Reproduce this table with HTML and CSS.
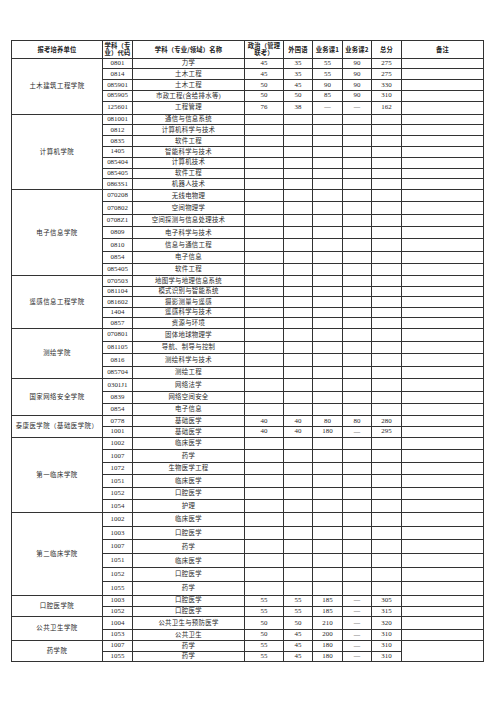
FILE: index.html
```html
<!DOCTYPE html>
<html lang="zh-CN">
<head>
<meta charset="utf-8">
<title>报考分数线</title>
<link rel="stylesheet" href="styles.css">
</head>
<body>
<table class="score">
<colgroup>
<col class="c-unit"><col class="c-code"><col class="c-name"><col class="c-pol"><col class="c-lang"><col class="c-s1"><col class="c-s2"><col class="c-tot"><col class="c-note">
</colgroup>
<thead>
<tr class="hd">
<th>报考培养单位</th><th>学科（专<br>业）代码</th><th>学科（专业/领域）名称</th><th>政治（管理<br>联考）</th><th>外国语</th><th>业务课1</th><th>业务课2</th><th>总分</th><th>备注</th>
</tr>
</thead>
<tbody>
<tr class="g1"><td class="unit" rowspan="5">土木建筑工程学院</td><td class="num">0801</td><td>力学</td><td class="num">45</td><td class="num">35</td><td class="num">55</td><td class="num">90</td><td class="num">275</td><td></td></tr>
<tr class="g1"><td class="num">0814</td><td>土木工程</td><td class="num">45</td><td class="num">35</td><td class="num">55</td><td class="num">90</td><td class="num">275</td><td></td></tr>
<tr class="g1"><td class="num">085901</td><td>土木工程</td><td class="num">50</td><td class="num">45</td><td class="num">90</td><td class="num">90</td><td class="num">330</td><td></td></tr>
<tr class="g1"><td class="num">085905</td><td>市政工程(含给排水等)</td><td class="num">50</td><td class="num">50</td><td class="num">85</td><td class="num">90</td><td class="num">310</td><td></td></tr>
<tr class="g1b"><td class="num">125601</td><td>工程管理</td><td class="num">76</td><td class="num">38</td><td class="dash">—</td><td class="dash">—</td><td class="num">162</td><td></td></tr>

<tr class="g2"><td class="unit" rowspan="7">计算机学院</td><td class="num">081001</td><td>通信与信息系统</td><td></td><td></td><td></td><td></td><td></td><td></td></tr>
<tr class="g2"><td class="num">0812</td><td>计算机科学与技术</td><td></td><td></td><td></td><td></td><td></td><td></td></tr>
<tr class="g2"><td class="num">0835</td><td>软件工程</td><td></td><td></td><td></td><td></td><td></td><td></td></tr>
<tr class="g2"><td class="num">1405</td><td>智能科学与技术</td><td></td><td></td><td></td><td></td><td></td><td></td></tr>
<tr class="g2"><td class="num">085404</td><td>计算机技术</td><td></td><td></td><td></td><td></td><td></td><td></td></tr>
<tr class="g2"><td class="num">085405</td><td>软件工程</td><td></td><td></td><td></td><td></td><td></td><td></td></tr>
<tr class="g2"><td class="num">0863S1</td><td>机器人技术</td><td></td><td></td><td></td><td></td><td></td><td></td></tr>

<tr class="g3"><td class="unit" rowspan="7">电子信息学院</td><td class="num">070208</td><td>无线电物理</td><td></td><td></td><td></td><td></td><td></td><td></td></tr>
<tr class="g3"><td class="num">070802</td><td>空间物理学</td><td></td><td></td><td></td><td></td><td></td><td></td></tr>
<tr class="g3"><td class="num">0708Z1</td><td>空间探测与信息处理技术</td><td></td><td></td><td></td><td></td><td></td><td></td></tr>
<tr class="g3"><td class="num">0809</td><td>电子科学与技术</td><td></td><td></td><td></td><td></td><td></td><td></td></tr>
<tr class="g3"><td class="num">0810</td><td>信息与通信工程</td><td></td><td></td><td></td><td></td><td></td><td></td></tr>
<tr class="g3"><td class="num">0854</td><td>电子信息</td><td></td><td></td><td></td><td></td><td></td><td></td></tr>
<tr class="g3"><td class="num">085405</td><td>软件工程</td><td></td><td></td><td></td><td></td><td></td><td></td></tr>

<tr class="g4"><td class="unit" rowspan="5">遥感信息工程学院</td><td class="num">070503</td><td>地图学与地理信息系统</td><td></td><td></td><td></td><td></td><td></td><td></td></tr>
<tr class="g4"><td class="num">081104</td><td>模式识别与智能系统</td><td></td><td></td><td></td><td></td><td></td><td></td></tr>
<tr class="g4"><td class="num">081602</td><td>摄影测量与遥感</td><td></td><td></td><td></td><td></td><td></td><td></td></tr>
<tr class="g4"><td class="num">1404</td><td>遥感科学与技术</td><td></td><td></td><td></td><td></td><td></td><td></td></tr>
<tr class="g4"><td class="num">0857</td><td>资源与环境</td><td></td><td></td><td></td><td></td><td></td><td></td></tr>

<tr class="g5"><td class="unit" rowspan="4">测绘学院</td><td class="num">070801</td><td>固体地球物理学</td><td></td><td></td><td></td><td></td><td></td><td></td></tr>
<tr class="g5"><td class="num">081105</td><td>导航、制导与控制</td><td></td><td></td><td></td><td></td><td></td><td></td></tr>
<tr class="g5"><td class="num">0816</td><td>测绘科学与技术</td><td></td><td></td><td></td><td></td><td></td><td></td></tr>
<tr class="g5"><td class="num">085704</td><td>测绘工程</td><td></td><td></td><td></td><td></td><td></td><td></td></tr>

<tr class="g6"><td class="unit" rowspan="3">国家网络安全学院</td><td class="num">0301J1</td><td>网络法学</td><td></td><td></td><td></td><td></td><td></td><td></td></tr>
<tr class="g6"><td class="num">0839</td><td>网络空间安全</td><td></td><td></td><td></td><td></td><td></td><td></td></tr>
<tr class="g6"><td class="num">0854</td><td>电子信息</td><td></td><td></td><td></td><td></td><td></td><td></td></tr>

<tr class="g7"><td class="unit" rowspan="2">泰康医学院（基础医学院）</td><td class="num">0778</td><td>基础医学</td><td class="num">40</td><td class="num">40</td><td class="num">80</td><td class="num">80</td><td class="num">280</td><td></td></tr>
<tr class="g7"><td class="num">1001</td><td>基础医学</td><td class="num">40</td><td class="num">40</td><td class="num">180</td><td class="dash">—</td><td class="num">295</td><td></td></tr>

<tr class="g8"><td class="unit" rowspan="6">第一临床学院</td><td class="num">1002</td><td>临床医学</td><td></td><td></td><td></td><td></td><td></td><td></td></tr>
<tr class="g8"><td class="num">1007</td><td>药学</td><td></td><td></td><td></td><td></td><td></td><td></td></tr>
<tr class="g8"><td class="num">1072</td><td>生物医学工程</td><td></td><td></td><td></td><td></td><td></td><td></td></tr>
<tr class="g8"><td class="num">1051</td><td>临床医学</td><td></td><td></td><td></td><td></td><td></td><td></td></tr>
<tr class="g8"><td class="num">1052</td><td>口腔医学</td><td></td><td></td><td></td><td></td><td></td><td></td></tr>
<tr class="g8"><td class="num">1054</td><td>护理</td><td></td><td></td><td></td><td></td><td></td><td></td></tr>

<tr class="g9"><td class="unit" rowspan="6">第二临床学院</td><td class="num">1002</td><td>临床医学</td><td></td><td></td><td></td><td></td><td></td><td></td></tr>
<tr class="g9"><td class="num">1003</td><td>口腔医学</td><td></td><td></td><td></td><td></td><td></td><td></td></tr>
<tr class="g9"><td class="num">1007</td><td>药学</td><td></td><td></td><td></td><td></td><td></td><td></td></tr>
<tr class="g9"><td class="num">1051</td><td>临床医学</td><td></td><td></td><td></td><td></td><td></td><td></td></tr>
<tr class="g9"><td class="num">1052</td><td>口腔医学</td><td></td><td></td><td></td><td></td><td></td><td></td></tr>
<tr class="g9"><td class="num">1055</td><td>药学</td><td></td><td></td><td></td><td></td><td></td><td></td></tr>

<tr class="g10"><td class="unit" rowspan="2">口腔医学院</td><td class="num">1003</td><td>口腔医学</td><td class="num">55</td><td class="num">55</td><td class="num">185</td><td class="dash">—</td><td class="num">305</td><td></td></tr>
<tr class="g10"><td class="num">1052</td><td>口腔医学</td><td class="num">55</td><td class="num">55</td><td class="num">185</td><td class="dash">—</td><td class="num">315</td><td></td></tr>

<tr class="g11a"><td class="unit" rowspan="2">公共卫生学院</td><td class="num">1004</td><td>公共卫生与预防医学</td><td class="num">50</td><td class="num">50</td><td class="num">210</td><td class="dash">—</td><td class="num">320</td><td></td></tr>
<tr class="g11b"><td class="num">1053</td><td>公共卫生</td><td class="num">50</td><td class="num">45</td><td class="num">200</td><td class="dash">—</td><td class="num">310</td><td></td></tr>

<tr class="g12a"><td class="unit" rowspan="2">药学院</td><td class="num">1007</td><td>药学</td><td class="num">55</td><td class="num">45</td><td class="num">180</td><td class="dash">—</td><td class="num">310</td><td rowspan="2"></td></tr>
<tr class="g12b"><td class="num">1055</td><td>药学</td><td class="num">55</td><td class="num">45</td><td class="num">180</td><td class="dash">—</td><td class="num">310</td></tr>
</tbody>
</table>
</body>
</html>
```
FILE: styles.css
```css
html, body {
  margin: 0;
  padding: 0;
  background: #ffffff;
}

body {
  padding: 40px 0 0 11px;
  font-family: "Liberation Serif", "Noto Sans CJK SC", serif;
  color: #2a2a2a;
}

.score {
  border-collapse: collapse;
  table-layout: fixed;
  width: 472px;
  font-size: 6.4px;
  line-height: 1;
}

.c-unit { width: 91px; }
.c-code { width: 30px; }
.c-name { width: 112px; }
.c-pol { width: 39px; }
.c-lang { width: 29px; }
.c-s1 { width: 30px; }
.c-s2 { width: 29px; }
.c-tot { width: 30px; }
.c-note { width: 82px; }

.score th,
.score td {
  border: 1px solid #333;
  padding: 0;
  text-align: center;
  vertical-align: middle;
  overflow: hidden;
  white-space: nowrap;
  letter-spacing: 0.3px;
}

.score th {
  font-family: "Noto Sans CJK SC", sans-serif;
  font-weight: 700;
  font-size: 6.3px;
  line-height: 7.6px;
  color: #222;
  letter-spacing: 0.2px;
}

.score td.num {
  font-family: "Liberation Serif", serif;
  font-size: 6.9px;
  letter-spacing: 0;
}

.score td.dash {
  font-family: "Liberation Serif", serif;
  font-size: 6.4px;
}

.score td.unit {
  font-size: 6.4px;
  letter-spacing: 0.5px;
}

.hd { height: 17.6px; }
.g1 { height: 10.75px; }
.g1b { height: 13px; }
.g2 { height: 10.8px; }
.g3 { height: 12.3px; }
.g4 { height: 10.54px; }
.g5 { height: 12.65px; }
.g6 { height: 12.23px; }
.g7 { height: 10.85px; }
.g8 { height: 12.5px; }
.g9 { height: 13.83px; }
.g10 { height: 10.8px; }
.g11a { height: 12.4px; }
.g11b { height: 11px; }
.g12a { height: 11px; }
.g12b { height: 10px; }
```
